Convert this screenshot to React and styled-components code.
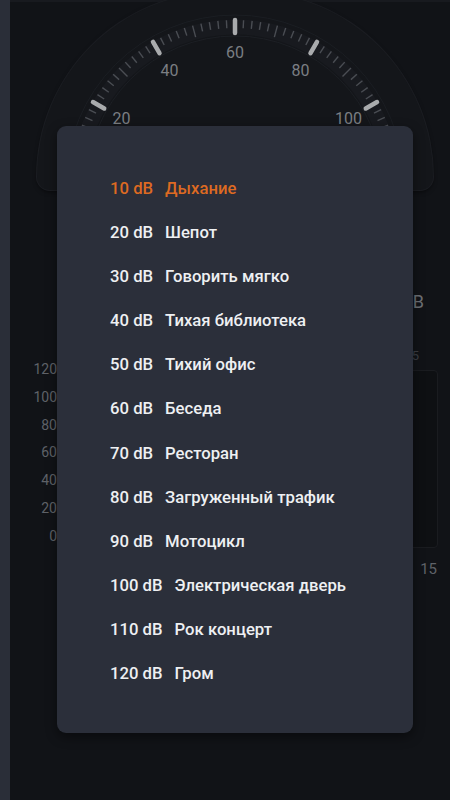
import styled, { createGlobalStyle } from "styled-components";

const GlobalStyle = createGlobalStyle`
  html, body {
    margin: 0;
    padding: 0;
    background: #111317;
    font-family: Roboto, "Noto Sans", "Liberation Sans", sans-serif;
  }
`;

// page layout
const Page = styled.div`
  width: 450px;
  height: 800px;
  display: flex;
  position: relative;
  overflow: hidden;
  background: #111317;
`;

const SideStrip = styled.div`
  width: 10px;
  background: #2a2e38;
`;

const Main = styled.div`
  flex: 1;
  display: flex;
  flex-direction: column;
  border-top: 2px solid #181a1f;
`;

const GaugeHousing = styled.div`
  margin: -10px 0 0 27px;
  width: 396px;
  height: 198px;
  border-radius: 198px 198px 14px 14px;
  background: #14161a;
  box-shadow: 0 0 0 1px #1b1d22, 0 2px 4px rgba(0, 0, 0, 0.5);
  overflow: hidden;
`;

const Readings = styled.div`
  margin-top: 104px;
  display: flex;
  flex-direction: column;
  align-items: flex-end;
  gap: 38px;
`;

const ReadingValue = styled.span`
  font-size: ${(p) => p.$size}px;
  color: ${(p) => p.$color};
  line-height: 16px;
  padding-right: ${(p) => p.$right}px;
`;

const ChartRow = styled.div`
  margin-top: -8px;
  display: flex;
  align-items: flex-start;
`;

const AxisLabels = styled.div`
  width: 47px;
  display: flex;
  flex-direction: column;
  align-items: flex-end;
`;

const AxisLabel = styled.span`
  font-size: 14px;
  line-height: 27.8px;
  color: #5f6268;
`;

const ChartColumn = styled.div`
  display: flex;
  flex-direction: column;
  align-items: flex-end;
`;

const ChartBox = styled.div`
  margin-top: 14px;
  width: 379px;
  height: 176px;
  background: #0e1013;
  border: 1px solid #1a1c20;
  border-radius: 4px;
`;

const TimeLabel = styled.span`
  margin-top: 12px;
  font-size: 15px;
  color: #5f6268;
  padding-right: 1px;
`;

// dialog
const Dialog = styled.div`
  position: absolute;
  left: 57px;
  top: 126px;
  width: 356px;
  height: 607px;
  box-sizing: border-box;
  padding: 40px 0 37px 53px;
  background: #2b2f3a;
  border-radius: 9px;
  box-shadow: 0 4px 12px rgba(0, 0, 0, 0.45);
  display: flex;
  flex-direction: column;
`;

const Row = styled.div`
  height: 44.2px;
  display: flex;
  align-items: center;
  gap: 12px;
  font-size: 16.7px;
  font-weight: 500;
  color: ${(p) => (p.$active ? "#dd6a22" : "#eef0f2")};
`;

const levels = [
  [10, "Дыхание"],
  [20, "Шепот"],
  [30, "Говорить мягко"],
  [40, "Тихая библиотека"],
  [50, "Тихий офис"],
  [60, "Беседа"],
  [70, "Ресторан"],
  [80, "Загруженный трафик"],
  [90, "Мотоцикл"],
  [100, "Электрическая дверь"],
  [110, "Рок концерт"],
  [120, "Гром"],
];

function GaugeDial() {
  // dial center inside housing svg
  const cx = 198;
  const cy = 192;
  const ticks = [];
  for (let i = 0; i <= 60; i++) {
    const v = i * 2;
    const a = Math.PI - (v / 120) * Math.PI;
    const major = v % 20 === 0;
    const mid = v % 10 === 0 && !major;
    const r1 = 164;
    const r2 = major ? 151 : mid ? 152 : 156;
    ticks.push(
      <line
        key={i}
        x1={cx + r1 * Math.cos(a)}
        y1={cy - r1 * Math.sin(a)}
        x2={cx + r2 * Math.cos(a)}
        y2={cy - r2 * Math.sin(a)}
        stroke={major ? "#a9abad" : "#4a4d53"}
        strokeWidth={major ? 4.5 : 1.4}
        strokeLinecap={major ? "round" : "butt"}
      />
    );
  }
  const labels = [20, 40, 60, 80, 100].map((v) => {
    const a = Math.PI - (v / 120) * Math.PI;
    const r = 131;
    return (
      <text
        key={v}
        x={cx + r * Math.cos(a)}
        y={cy - r * Math.sin(a) + 5}
        textAnchor="middle"
        fontSize="16"
        fill="#7b7e83"
        fontFamily="Roboto, sans-serif"
      >
        {v}
      </text>
    );
  });
  return (
    <svg width="396" height="198" viewBox="0 0 396 198">
      <circle cx={cx} cy={cy} r="169" fill="none" stroke="#1b1e23" strokeWidth="1" />
      <circle cx={cx} cy={cy} r="157" fill="none" stroke="#181a1f" strokeWidth="15" />
      <circle cx={cx} cy={cy} r="148" fill="none" stroke="#1c1f24" strokeWidth="1" />
      {ticks}
      {labels}
    </svg>
  );
}

export default function App() {
  return (
    <>
      <GlobalStyle />
      <Page>
        <SideStrip />
        <Main>
          <GaugeHousing>
            <GaugeDial />
          </GaugeHousing>
          <Readings>
            <ReadingValue $size={18} $color="#6d7075" $right={26}>
              0 dB
            </ReadingValue>
            <ReadingValue $size={13} $color="#3c3f45" $right={31}>
              45
            </ReadingValue>
          </Readings>
          <ChartRow>
            <AxisLabels>
              {[120, 100, 80, 60, 40, 20, 0].map((n) => (
                <AxisLabel key={n}>{n}</AxisLabel>
              ))}
            </AxisLabels>
            <ChartColumn>
              <ChartBox />
              <TimeLabel>15</TimeLabel>
            </ChartColumn>
          </ChartRow>
        </Main>
        <Dialog>
          {levels.map(([db, name], i) => (
            <Row key={db} $active={i === 0}>
              <span>{db} dB</span>
              <span>{name}</span>
            </Row>
          ))}
        </Dialog>
      </Page>
    </>
  );
}
